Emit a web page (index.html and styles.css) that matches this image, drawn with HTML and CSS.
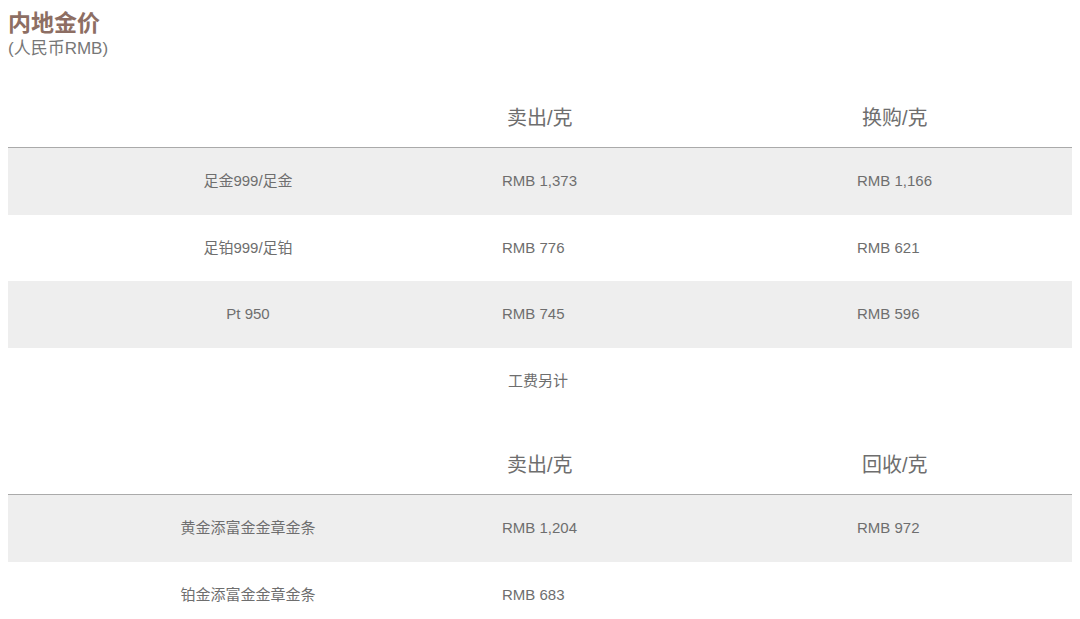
FILE: index.html
```html
<!DOCTYPE html>
<html lang="zh">
<head>
<meta charset="utf-8">
<title>内地金价</title>
<link rel="stylesheet" href="styles.css">
</head>
<body>
<div class="page">
  <header class="intro">
    <h1 class="title">内地金价</h1>
    <div class="subtitle">(人民币RMB)</div>
  </header>

  <div class="table first">
    <div class="row head">
      <div class="cell name"></div>
      <div class="cell col">卖出/克</div>
      <div class="cell col">换购/克</div>
    </div>
    <div class="row shade">
      <div class="cell name">足金999/足金</div>
      <div class="cell val">RMB 1,373</div>
      <div class="cell val">RMB 1,166</div>
    </div>
    <div class="row">
      <div class="cell name">足铂999/足铂</div>
      <div class="cell val">RMB 776</div>
      <div class="cell val">RMB 621</div>
    </div>
    <div class="row shade">
      <div class="cell name">Pt 950</div>
      <div class="cell val">RMB 745</div>
      <div class="cell val">RMB 596</div>
    </div>
    <div class="row">
      <div class="cell name"></div>
      <div class="cell note">工费另计</div>
      <div class="cell val"></div>
    </div>
  </div>

  <div class="table second">
    <div class="row head">
      <div class="cell name"></div>
      <div class="cell col">卖出/克</div>
      <div class="cell col">回收/克</div>
    </div>
    <div class="row shade">
      <div class="cell name">黄金添富金金章金条</div>
      <div class="cell val">RMB 1,204</div>
      <div class="cell val">RMB 972</div>
    </div>
    <div class="row">
      <div class="cell name">铂金添富金金章金条</div>
      <div class="cell val">RMB 683</div>
      <div class="cell val"></div>
    </div>
  </div>
</div>
</body>
</html>
```

FILE: styles.css
```css
*, *::before, *::after {
  box-sizing: border-box;
}

html, body {
  margin: 0;
  padding: 0;
  background: #ffffff;
}

body {
  font-family: "Liberation Sans", Arial, "Noto Sans CJK SC", sans-serif;
  color: #6e6e6e;
}

.page {
  padding: 0 8px;
}

.intro {
  padding-top: 8px;
}

.title {
  margin: 0;
  font-size: 23px;
  line-height: 31px;
  font-weight: bold;
  color: #8d6e63;
}

.subtitle {
  font-size: 17px;
  line-height: 20px;
  color: #777777;
}

.table {
  display: flex;
  flex-direction: column;
}

.first {
  margin-top: 47px;
}

.second {
  margin-top: 39px;
}

.row {
  display: grid;
  grid-template-columns: 480px 355px 1fr;
  height: 66.5px;
  align-items: center;
  font-size: 15px;
  line-height: 18px;
}

.row.shade {
  background: #eeeeee;
}

.row.head {
  height: 42px;
  align-items: end;
  padding-bottom: 17px;
  border-bottom: 1px solid #aaaaaa;
  font-size: 20px;
  line-height: 24px;
}

.cell.name {
  text-align: center;
}

.cell.val {
  padding-left: 14px;
}

.cell.col {
  padding-left: 19px;
}

.cell.note {
  padding-left: 20px;
}
```
